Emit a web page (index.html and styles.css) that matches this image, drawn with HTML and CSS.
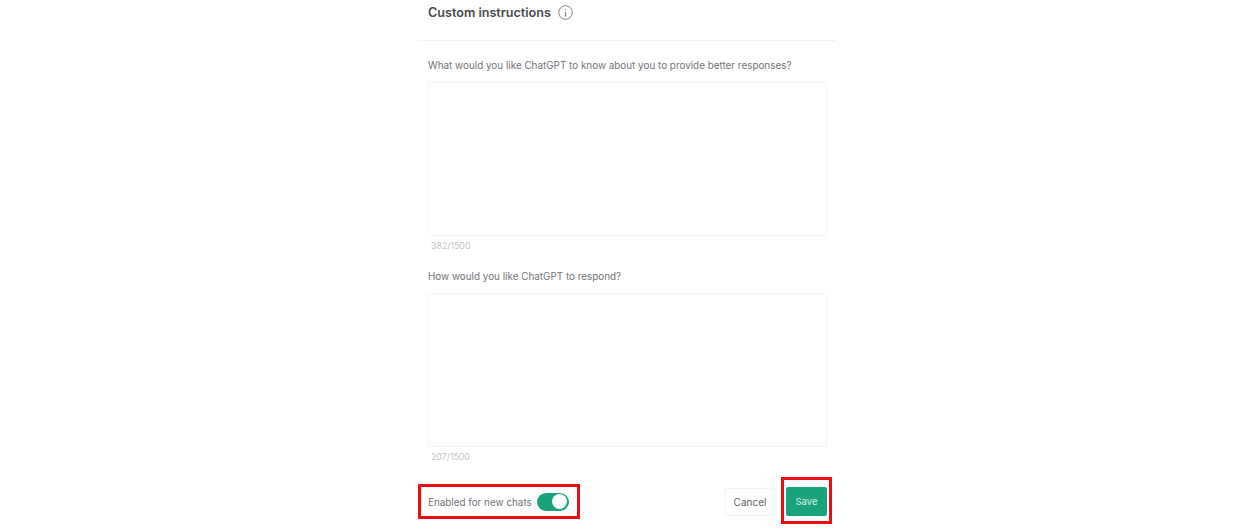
FILE: index.html
```html
<!DOCTYPE html>
<html lang="en">
<head>
    <meta charset="UTF-8">
    <title>Custom instructions</title>
    <link rel="stylesheet" href="styles.css">
</head>
<body>
    <div class="dialog">
        <div class="dialog-header">
            <span class="dialog-title">Custom instructions</span>
            <svg class="info-icon" width="15" height="15" viewBox="0 0 15 15" fill="none" stroke="#808080" stroke-width="1">
                <circle cx="7.5" cy="7.5" r="6.8"/>
                <path d="M7.5 6.8V10.8M6.5 10.8H8.5"/>
                <circle cx="7.5" cy="4.5" r="0.35"/>
            </svg>
        </div>

        <div class="dialog-body">
            <label class="field-label">What would you like ChatGPT to know about you to provide better responses?</label>
            <div class="text-box"></div>
            <div class="counter">382/1500</div>

            <label class="field-label second">How would you like ChatGPT to respond?</label>
            <div class="text-box"></div>
            <div class="counter">207/1500</div>
        </div>

        <div class="dialog-footer">
            <div class="highlight toggle-row">
                <span>Enabled for new chats</span>
                <span class="toggle"><span class="toggle-knob"></span></span>
            </div>
            <div class="actions">
                <button class="cancel-button">Cancel</button>
                <div class="highlight save-wrap">
                    <button class="save-button">Save</button>
                </div>
            </div>
        </div>
    </div>
</body>
</html>
```

FILE: styles.css
```css
body {
    margin: 0;
    height: 530px;
    background-color: #ffffff;
    font-family: Inter, 'Liberation Sans', Arial, sans-serif;
    overflow: hidden;
}

.dialog {
    width: 418px;
    margin-left: 418px;
}

.dialog-header {
    display: flex;
    align-items: center;
    gap: 7px;
    height: 41px;
    padding: 0 10px 15px;
    box-sizing: border-box;
    border-bottom: 1px solid #f3f3f3;
}

.dialog-title {
    color: #48484c;
    font-size: 12.6px;
    font-weight: 600;
}

.dialog-body {
    padding: 16px 9px 0 10px;
}

.field-label {
    display: block;
    height: 16px;
    color: #737377;
    font-size: 9.9px;
    line-height: 16px;
}

.field-label.second {
    margin-top: 15px;
}

.text-box {
    height: 152px;
    margin-top: 9px;
    border: 1px solid #f5f5f5;
    border-radius: 2px;
    background-color: #ffffff;
}

.counter {
    height: 14px;
    margin-top: 3px;
    padding-left: 3px;
    color: #c2c2c2;
    font-size: 8.8px;
    line-height: 14px;
}

.dialog-footer {
    display: flex;
    align-items: center;
    justify-content: space-between;
    margin-top: 13px;
}

.highlight {
    border: 3px solid #ec0b10;
    box-sizing: border-box;
}

.toggle-row {
    display: flex;
    align-items: center;
    gap: 5px;
    width: 162px;
    height: 35px;
    margin-top: 2px;
    padding-left: 7px;
    color: #737377;
    font-size: 9.9px;
}

.toggle {
    display: flex;
    justify-content: flex-end;
    align-items: center;
    width: 32px;
    height: 18px;
    padding: 0 2px;
    box-sizing: border-box;
    border-radius: 9px;
    background-color: #19a37d;
}

.toggle-knob {
    width: 15px;
    height: 15px;
    border-radius: 50%;
    background-color: #ffffff;
}

.actions {
    display: flex;
    align-items: center;
    gap: 5px;
    margin-right: 4px;
}

.cancel-button {
    width: 52px;
    height: 28px;
    margin-top: 2px;
    padding: 0;
    background-color: #ffffff;
    border: 1px solid #f3f3f3;
    border-radius: 2px;
    color: #5f5f64;
    font-family: inherit;
    font-size: 10px;
}

.save-wrap {
    display: flex;
    align-items: center;
    justify-content: center;
    width: 51px;
    height: 47px;
    padding-top: 2px;
}

.save-button {
    width: 41px;
    height: 29px;
    padding: 0;
    background-color: #19a37d;
    border: none;
    border-radius: 2px;
    color: #d8f0e8;
    font-family: inherit;
    font-size: 9.5px;
}
```
